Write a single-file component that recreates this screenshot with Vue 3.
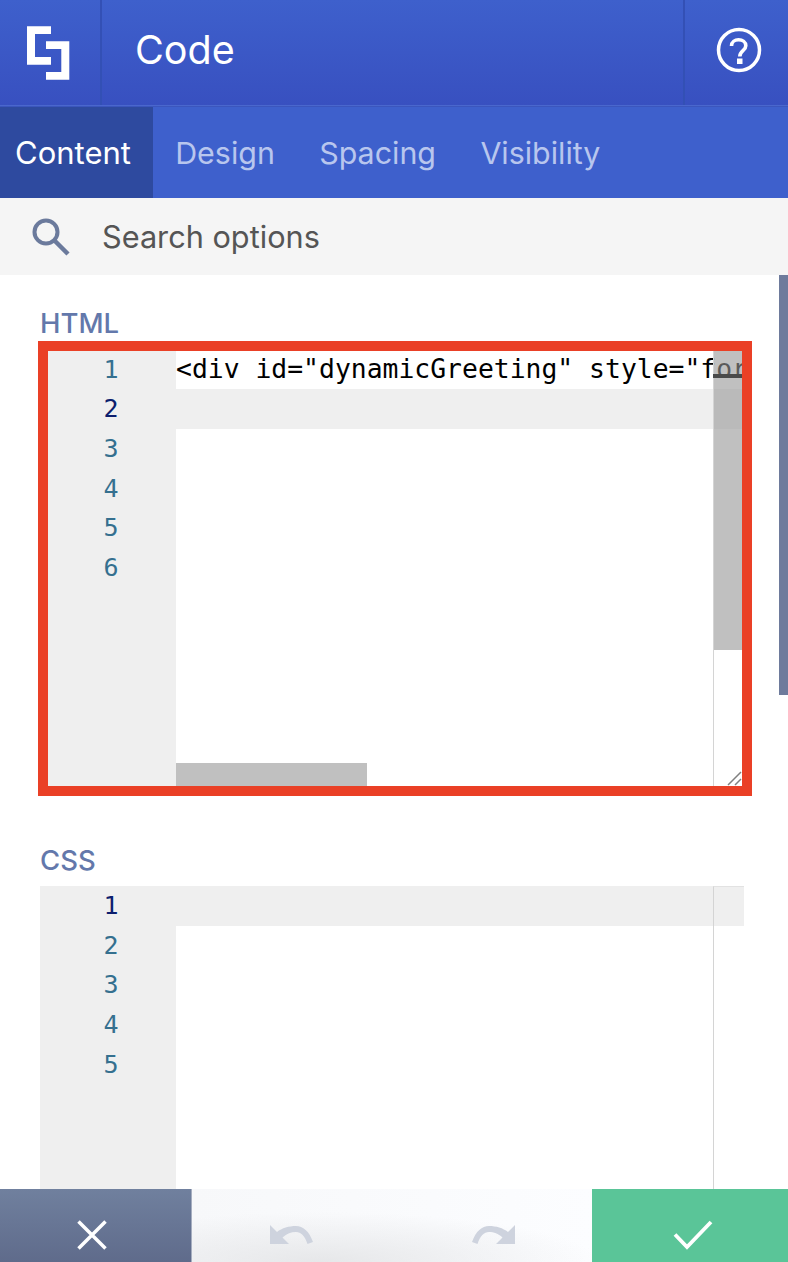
<script setup>
const htmlLines = [1, 2, 3, 4, 5, 6]
const cssLines = [1, 2, 3, 4, 5]
const tabs = ['Design', 'Spacing', 'Visibility']
const arrow = 'M0 0V19H19L12.500 12.500C17 8.500 21 7 26 7C31 7 35 11 37.500 19L43 17C39 6 33 1 26 1C19 1 12 3 7 7Z'
</script>

<template>
  <div class="app">
    <header class="header">
      <div class="logo-cell">
        <svg width="43" height="54" viewBox="0 0 43 54">
          <path fill="#fff" d="M0 0.300H24V8H8V31H24V38.700H0Z" />
          <path fill="#fff" d="M19 15.300H42.300V53.700H19V46H34.300V23H19Z" />
        </svg>
      </div>
      <div class="title">Code</div>
      <div class="help-cell">
        <svg width="46" height="46" viewBox="0 0 46 46">
          <circle cx="23" cy="23" r="20.500" fill="none" stroke="#fff" stroke-width="3.500" />
          <path d="M15.500 19C15.500 15 19 12.800 22.500 12.800C26.500 12.800 29.800 15 29.800 18.800C29.800 24 23.800 23.500 23.800 29.500" fill="none" stroke="#fff" stroke-width="3.600" />
          <rect x="21" y="31.500" width="5.500" height="5.500" fill="#fff" />
        </svg>
      </div>
    </header>

    <nav class="tabs">
      <div class="tab active">Content</div>
      <div v-for="t in tabs" :key="t" class="tab">{{ t }}</div>
    </nav>

    <div class="search">
      <svg class="search-icon" width="40" height="40" viewBox="0 0 40 40">
        <circle cx="15" cy="15" r="11.500" fill="none" stroke="#6b7a9c" stroke-width="4" />
        <path d="M23.500 23.500L37 37" fill="none" stroke="#6b7a9c" stroke-width="4.500" />
      </svg>
      <span class="search-text">Search options</span>
    </div>

    <main class="body">
      <div class="page-scroll"></div>

      <section class="field first">
        <div class="label">HTML</div>
        <div class="editor html-editor">
          <div class="gutter">
            <div v-for="n in htmlLines" :key="n" class="num" :class="{ on: n === 2 }">{{ n }}</div>
          </div>
          <div class="lines">
            <div class="line code">&lt;div id="dynamicGreeting" style="for</div>
            <div class="line hl"></div>
          </div>
          <div class="vbar"><div class="vthumb"></div></div>
          <div class="hthumb"></div>
          <svg class="grip" width="16" height="16" viewBox="0 0 16 16">
            <path d="M2 15L15 2M9 15L15 9" stroke="#808080" stroke-width="1.500" fill="none" />
          </svg>
          <div class="under"></div>
        </div>
        <div class="highlight"></div>
      </section>

      <section class="field second">
        <div class="label">CSS</div>
        <div class="editor css-editor">
          <div class="gutter">
            <div v-for="n in cssLines" :key="n" class="num" :class="{ on: n === 1 }">{{ n }}</div>
          </div>
          <div class="lines">
            <div class="line hl"></div>
          </div>
          <div class="vbar"></div>
        </div>
      </section>
    </main>

    <footer class="footer">
      <div class="btn cancel">
        <svg width="32" height="32" viewBox="0 0 32 32">
          <path d="M2.500 2.500L29.500 29.500M29.500 2.500L2.500 29.500" stroke="#fff" stroke-width="3.500" fill="none" />
        </svg>
      </div>
      <div class="history">
        <svg width="44" height="20" viewBox="0 0 44 20">
          <path fill="#ced3de" :d="arrow" />
        </svg>
        <svg width="44" height="20" viewBox="0 0 44 20">
          <path fill="#ced3de" :d="arrow" transform="matrix(-1 0 0 1 44 0)" />
        </svg>
      </div>
      <div class="btn ok">
        <svg width="40" height="30" viewBox="0 0 40 30">
          <path d="M2 14.500L14 27L38 2" stroke="#fff" stroke-width="3.800" fill="none" />
        </svg>
      </div>
    </footer>
  </div>
</template>

<style scoped>
.app {
  width: 788px;
  height: 1262px;
  display: flex;
  flex-direction: column;
  overflow: hidden;
  font-family: Inter, "Noto Sans", sans-serif;
  background: #fff;
}
.header {
  height: 106px;
  box-sizing: border-box;
  display: flex;
  flex: none;
  align-items: stretch;
  background: linear-gradient(#3e60cc, #3850c0);
  border-bottom: 1px solid #4a67cd;
}
.logo-cell {
  width: 102px;
  flex: none;
  display: flex;
  align-items: center;
  justify-content: center;
  padding-right: 3px;
  box-sizing: border-box;
  border-right: 2px solid #3350b5;
}
.title {
  flex: 1;
  padding-left: 33px;
  font-size: 39.500px;
  line-height: 100px;
  color: #fff;
}
.help-cell {
  width: 105px;
  flex: none;
  display: flex;
  align-items: center;
  justify-content: center;
  box-sizing: border-box;
  border-left: 2px solid #3350b5;
  padding-left: 5px;
  padding-bottom: 5px;
}
.tabs {
  height: 92px;
  flex: none;
  display: flex;
  background: #3e60cc;
  border-top: 1px solid #3b56bd;
  box-sizing: border-box;
}
.tab {
  padding: 0 22.200px;
  font-size: 30.400px;
  line-height: 92px;
  color: #b8c6ee;
}
.tab.active {
  width: 153px;
  box-sizing: border-box;
  padding: 0 0 0 15px;
  background: #2e4a9f;
  color: #fff;
  font-size: 31px;
}
.search {
  height: 77px;
  flex: none;
  display: flex;
  align-items: center;
  background: #f5f5f5;
  padding-left: 31px;
}
.search-text {
  margin-left: 31px;
  font-size: 30.700px;
  color: #555;
}
.body {
  flex: 1;
  min-height: 0;
  position: relative;
  overflow: hidden;
  padding: 0 44px 0 40px;
}
.page-scroll {
  position: absolute;
  top: 0;
  right: 0;
  width: 9px;
  height: 420px;
  background: #6e7b9c;
}
.field {
  position: relative;
}
.first {
  padding-top: 31px;
}
.second {
  margin-top: 57px;
}
.label {
  font-size: 27.500px;
  font-weight: 500;
  line-height: 34px;
  height: 36px;
  color: #6378ab;
}
.second .label {
  height: 43px;
}
.editor {
  position: relative;
  display: flex;
  overflow: hidden;
  background: #fff;
}
.html-editor {
  height: 444px;
}
.css-editor {
  height: 400px;
}
.gutter {
  width: 136px;
  flex: none;
  background: #efefef;
  box-sizing: border-box;
  padding-top: 7.800px;
}
.css-editor .gutter {
  padding-top: 0.300px;
}
.num {
  height: 39.600px;
  line-height: 39.600px;
  text-align: right;
  padding-right: 57.500px;
  font-family: "DejaVu Sans Mono", monospace;
  font-size: 25px;
  color: #35708f;
}
.num.on {
  color: #0c1e6e;
}
.lines {
  flex: 1;
  min-width: 0;
  padding-top: 7.400px;
  overflow: hidden;
}
.css-editor .lines {
  padding-top: 0;
}
.line {
  height: 39.600px;
  line-height: 40px;
  white-space: nowrap;
}
.code {
  font-family: "DejaVu Sans Mono", monospace;
  font-size: 26.400px;
  color: #000;
}
.hl {
  background: #efefef;
}
.vbar {
  position: absolute;
  top: 0;
  right: 0;
  bottom: 0;
  width: 31px;
  box-sizing: border-box;
  border-left: 1px solid #d4d4d4;
}
.css-editor .vbar {
  border-top: 1px solid #e2e2e2;
}
.vthumb {
  height: 308px;
  background: rgba(150, 150, 150, 0.6);
}
.hthumb {
  position: absolute;
  left: 136px;
  top: 421px;
  width: 191px;
  height: 23px;
  background: #c0c0c0;
}
.grip {
  position: absolute;
  right: 2px;
  bottom: 0;
}
.under {
  position: absolute;
  left: 673px;
  top: 32px;
  width: 29px;
  height: 4px;
  background: #4a4a4a;
}
.highlight {
  position: absolute;
  left: -2px;
  top: 66px;
  width: 714px;
  height: 455px;
  box-sizing: border-box;
  border: 10px solid #ea4026;
  pointer-events: none;
}
.footer {
  height: 73px;
  flex: none;
  display: flex;
  position: relative;
}
.btn {
  display: flex;
  align-items: center;
  justify-content: center;
  flex: none;
}
.cancel {
  width: 192px;
  background: linear-gradient(#70809e, #5f6b8b);
  border-right: 1px solid #a6aec0;
  box-sizing: border-box;
  padding-top: 18px;
  padding-right: 7px;
}
.ok {
  width: 196px;
  background: #5ac598;
  box-sizing: border-box;
  padding-top: 18px;
  padding-left: 6px;
}
.history {
  flex: 1;
  display: flex;
  align-items: center;
  justify-content: space-between;
  padding: 18px 77px 0 78px;
  background: radial-gradient(ellipse 280px 50px at 32% 100%, #e6e7e9, rgba(230, 231, 233, 0)), linear-gradient(to right, #f7f8fa, #fcfdff);
}
</style>

<style>
html, body { margin: 0; overflow: hidden; background: #fff; }
</style>
